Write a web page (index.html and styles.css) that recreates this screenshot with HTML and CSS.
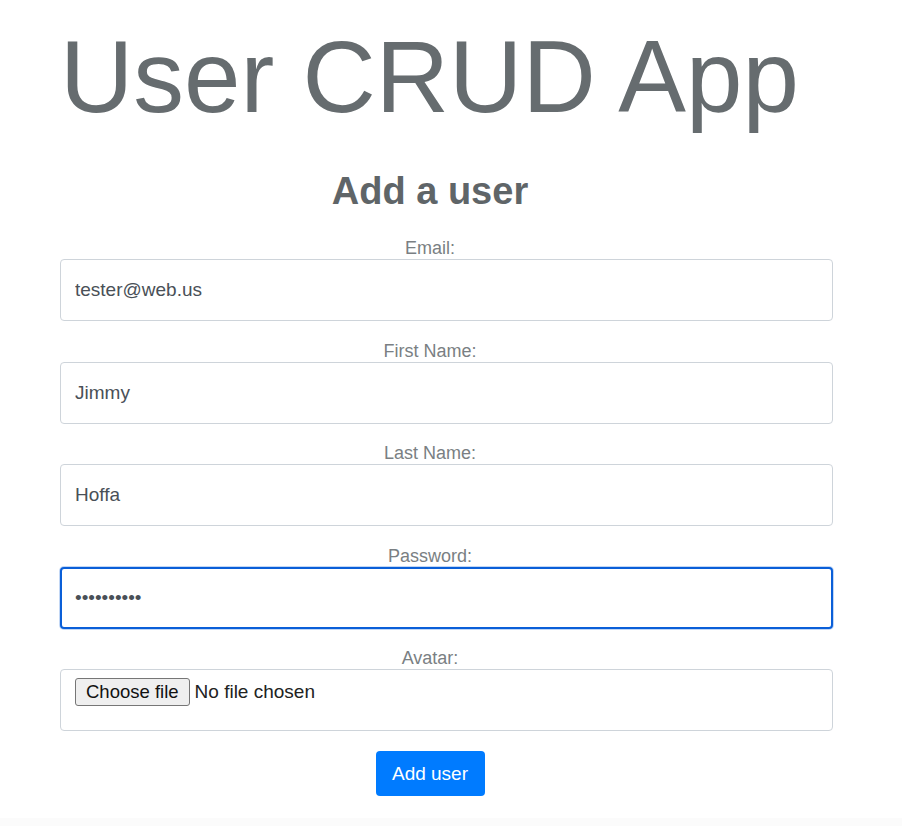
FILE: index.html
```html
<!DOCTYPE html>
<html lang="en">
<head>
<meta charset="utf-8">
<title>User CRUD App</title>
<link rel="stylesheet" href="styles.css">
</head>
<body>
<div class="page">
  <h1 class="title">User CRUD App</h1>
  <form class="form">
    <h2 class="form-heading">Add a user</h2>
    <div class="form-group">
      <label class="form-label" for="email">Email:</label>
      <input class="form-control" id="email" type="text" value="tester@web.us">
    </div>
    <div class="form-group">
      <label class="form-label" for="first">First Name:</label>
      <input class="form-control" id="first" type="text" value="Jimmy">
    </div>
    <div class="form-group">
      <label class="form-label" for="last">Last Name:</label>
      <input class="form-control" id="last" type="text" value="Hoffa">
    </div>
    <div class="form-group">
      <label class="form-label" for="password">Password:</label>
      <input class="form-control form-control-focus" id="password" type="password" value="1234567890">
    </div>
    <div class="form-group">
      <label class="form-label" for="avatar">Avatar:</label>
      <div class="file-control" id="avatar">
        <span class="file-button">Choose file</span>
        <span class="file-status">No file chosen</span>
      </div>
    </div>
    <div class="form-actions">
      <button class="btn-primary" type="button">Add user</button>
    </div>
  </form>
</div>
</body>
</html>
```
FILE: styles.css
```css
html {
  background: #fbfbfb;
}
body {
  margin: 0;
  font-family: "Liberation Sans", Arial, sans-serif;
}
.page {
  background: #fff;
  height: 818px;
  padding-top: 17px;
  box-sizing: border-box;
}
.title {
  margin: 0;
  padding-left: 60px;
  font-size: 101.5px;
  line-height: 120px;
  font-weight: normal;
  color: #666c6f;
}
.form {
  width: 860px;
  margin-top: 32px;
  text-align: center;
}
.form-heading {
  margin: 0 0 24px;
  font-size: 38px;
  line-height: 44px;
  font-weight: bold;
  color: #5f6568;
}
.form-group {
  margin-bottom: 18.5px;
}
.form-label {
  display: block;
  font-size: 18px;
  line-height: 22px;
  color: #7a7f83;
}
.form-control {
  display: block;
  box-sizing: border-box;
  margin-left: 60px;
  width: 773px;
  height: 62px;
  padding: 0 14px;
  border: 1px solid #ced4da;
  border-radius: 4px;
  font-family: "Liberation Sans", Arial, sans-serif;
  font-size: 19px;
  color: #495057;
  background: #fff;
  outline: none;
}
.form-control-focus {
  border: 2px solid #0a5fd8;
  padding-left: 13px;
  box-shadow: 0 0 0 1px rgba(10, 95, 216, 0.25);
}
.file-control {
  display: flex;
  align-items: flex-start;
  gap: 5px;
  box-sizing: border-box;
  margin-left: 60px;
  width: 773px;
  height: 62px;
  padding: 8px 14px 0;
  border: 1px solid #ced4da;
  border-radius: 4px;
  text-align: left;
}
.file-button {
  box-sizing: border-box;
  height: 28px;
  padding: 0 10px;
  border: 1px solid #767676;
  border-radius: 3px;
  background: #efefef;
  font-size: 18.5px;
  line-height: 26px;
  color: #111;
}
.file-status {
  font-size: 19px;
  line-height: 28px;
  color: #222;
}
.form-actions {
  padding-top: 1.5px;
}
.btn-primary {
  width: 109px;
  height: 45px;
  border: none;
  border-radius: 4px;
  background: #007bff;
  color: #fff;
  font-family: "Liberation Sans", Arial, sans-serif;
  font-size: 19px;
  padding: 0;
}
```
